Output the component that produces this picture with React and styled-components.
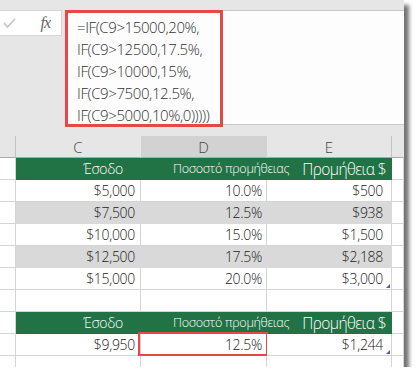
import React from "react";
import styled, { createGlobalStyle } from "styled-components";

const GlobalStyle = createGlobalStyle`
  body {
    margin: 0;
    background: #fff;
    font-family: "Open Sans", "Noto Sans", sans-serif;
  }
`;

const Window = styled.div`
  width: 404px;
  height: 367px;
  padding-top: 10px;
  box-sizing: border-box;
  overflow: hidden;
  background: #e6e6e6;
  box-shadow: 5px 5px 4px rgba(0, 0, 0, 0.55);
`;

const FormulaBar = styled.div`
  display: flex;
  align-items: flex-start;
  height: 115px;
`;

const IconBox = styled.div`
  width: 62px;
  height: 26px;
  box-sizing: border-box;
  background: #fff;
  border: 1px solid #d6d6d6;
  border-left: 0;
  display: flex;
  align-items: center;
  justify-content: space-between;
  padding: 0 11px 0 3px;
`;

const Fx = styled.span`
  font-family: "Liberation Serif", serif;
  font-style: italic;
  font-size: 16px;
  color: #666;
  letter-spacing: -1px;
`;

const FormulaArea = styled.div`
  flex: 1;
  height: 115px;
  margin-left: 3px;
  box-sizing: border-box;
  background: #fdfdfd;
  border-top: 1px solid #c8c8c8;
  border-bottom: 1px solid #c8c8c8;
  display: flex;
  align-items: flex-start;
`;

const Highlight = styled.div`
  width: 158px;
  height: 117px;
  margin-top: -1px;
  box-sizing: border-box;
  border: 3px solid #e8474a;
  padding: 3px 0 0 9px;
  font-size: 15px;
  font-weight: 300;
  line-height: 22px;
  color: #333;
  white-space: nowrap;
  letter-spacing: -0.4px;
`;

const Sheet = styled.div`
  margin-top: 11px;
  display: grid;
  grid-template-columns: 16px 125px 126px 125px 12px;
`;

const HeadCell = styled.div`
  height: 22px;
  box-sizing: border-box;
  background: ${(p) => (p.$active ? "#d2d2d2" : "#e6e6e6")};
  border-right: 1px solid ${(p) => (p.$line ? "#c4c4c4" : "transparent")};
  border-bottom: 1px solid #ababab;
  display: flex;
  align-items: center;
  justify-content: center;
  font-size: 15px;
  font-weight: 300;
  color: #444;
`;

const Cell = styled.div`
  position: relative;
  height: 22px;
  box-sizing: border-box;
  background: ${(p) => p.$bg || "#fff"};
  border-right: 1px solid ${(p) => p.$bg || "#d4d4d4"};
  border-bottom: 1px solid ${(p) => p.$bg || "#d4d4d4"};
  display: flex;
  align-items: center;
  justify-content: ${(p) => (p.$left ? "flex-start" : "flex-end")};
  padding: ${(p) => p.$pad || "0 5px 0 0"};
  font-size: ${(p) => p.$size || 14}px;
  font-weight: 300;
  color: ${(p) => (p.$bg === "#217346" ? "#fff" : "#222")};
  white-space: nowrap;
  letter-spacing: ${(p) => p.$track || "-0.3px"};
  ${(p) =>
    p.$selected &&
    `
    &::after {
      content: "";
      position: absolute;
      left: -3px;
      top: -2px;
      right: -2px;
      bottom: -1px;
      border: 2px solid #e8474a;
    }
    &::before {
      content: "";
      position: absolute;
      right: -2px;
      bottom: -3px;
      width: 4px;
      height: 3px;
      background: #217346;
    }
  `}
  ${(p) =>
    p.$flag &&
    `
    &::after {
      content: "";
      position: absolute;
      right: 1px;
      bottom: 1px;
      border-style: solid;
      border-width: 0 0 4px 4px;
      border-color: transparent transparent #4a5ab5 transparent;
    }
  `}
`;

const Spill = styled.span`
  position: relative;
  z-index: 1;
`;

const GREEN = "#217346";
const GRAY = "#d9d9d9";

const rows = [
  { c: "$5,000", d: "10.0%", e: "$500" },
  { c: "$7,500", d: "12.5%", e: "$938", gray: true },
  { c: "$10,000", d: "15.0%", e: "$1,500" },
  { c: "$12,500", d: "17.5%", e: "$2,188", gray: true },
  { c: "$15,000", d: "20.0%", e: "$3,000", flag: true },
];

function GreenHeader() {
  return (
    <>
      <Cell />
      <Cell $bg={GREEN} $pad="0 17px 0 0" $size={14}>
        Έσοδο
      </Cell>
      <Cell $bg={GREEN} $left $pad="0 0 0 32px" $size={12.5}>
        <Spill>Ποσοστό προμήθειας</Spill>
      </Cell>
      <Cell $bg={GREEN} $size={15.5} $track="-0.6px" $pad="0 5px 0 0">
        Προμήθεια $
      </Cell>
      <Cell />
    </>
  );
}

function EmptyRow() {
  return (
    <>
      <Cell />
      <Cell />
      <Cell />
      <Cell />
      <Cell />
    </>
  );
}

export default function App() {
  return (
    <>
      <GlobalStyle />
      <Window>
        <FormulaBar>
          <IconBox>
            <svg width="13" height="10" viewBox="0 0 13 10">
              <polyline
                points="1,5 4.5,9 12,1"
                fill="none"
                stroke="#c4c4c4"
                strokeWidth="1.7"
              />
            </svg>
            <Fx>fx</Fx>
          </IconBox>
          <FormulaArea>
            <Highlight>
              =IF(C9&gt;15000,20%,
              <br />
              IF(C9&gt;12500,17.5%,
              <br />
              IF(C9&gt;10000,15%,
              <br />
              IF(C9&gt;7500,12.5%,
              <br />
              IF(C9&gt;5000,10%,0)))))
            </Highlight>
          </FormulaArea>
        </FormulaBar>

        <Sheet>
          <HeadCell $line />
          <HeadCell>C</HeadCell>
          <HeadCell $active>D</HeadCell>
          <HeadCell $line>E</HeadCell>
          <HeadCell />

          <GreenHeader />
          {rows.map((r) => (
            <React.Fragment key={r.c}>
              <Cell />
              <Cell $bg={r.gray ? GRAY : undefined}>{r.c}</Cell>
              <Cell $bg={r.gray ? GRAY : undefined} $pad="0 4px 0 0">
                {r.d}
              </Cell>
              <Cell $bg={r.gray ? GRAY : undefined} $pad="0 8px 0 0" $flag={r.flag}>
                {r.e}
              </Cell>
              <Cell />
            </React.Fragment>
          ))}
          <EmptyRow />
          <GreenHeader />
          <Cell />
          <Cell>$9,950</Cell>
          <Cell $pad="0 4px 0 0" $selected>
            12.5%
          </Cell>
          <Cell $pad="0 8px 0 0" $flag>
            $1,244
          </Cell>
          <Cell />
          <EmptyRow />
        </Sheet>
      </Window>
    </>
  );
}
